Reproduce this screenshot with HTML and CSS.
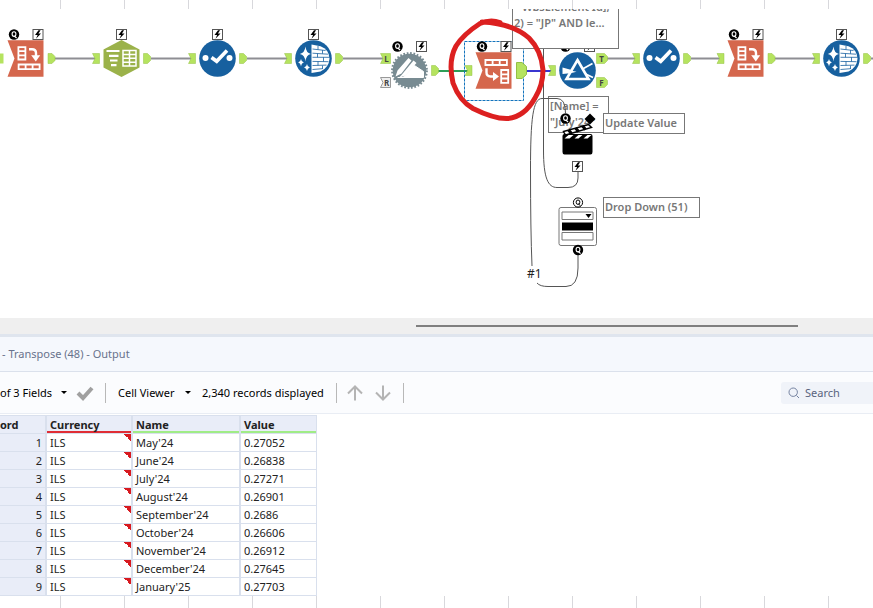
FILE: index.html
```
<!DOCTYPE html>
<html lang="en">
<head>
  <meta charset="UTF-8">
  <meta name="viewport" content="width=device-width, initial-scale=1">
  <title>Transpose (48) - Output</title>
  <link rel="stylesheet" href="styles.css">
</head>
<body>
  <main class="workflow">
    <svg class="flow" role="img" aria-label="Workflow">
      <defs>
        <!-- every tool is drawn around its own centre -->
        <g id="q">
          <circle r="5.2" fill="#000"/>
          <ellipse rx="1.9" ry="2.3" cy="-0.4" fill="none" stroke="#fff" stroke-width="1.1"/>
          <path d="M0.2 1.6L2.6 3.4" stroke="#fff" stroke-width="1.2"/>
        </g>
        <g id="qopen">
          <circle r="4.6" fill="#fff" stroke="#000"/>
          <ellipse rx="1.9" ry="2.2" cy="-0.3" fill="none" stroke="#000"/>
          <path d="M0.4 1.4L2.4 3.2" stroke="#000"/>
        </g>
        <g id="bolt">
          <rect x="-5" y="-5" width="10" height="10" fill="#fff" stroke="#555"/>
          <path d="M0.5 -4.2L-3 0.6H-0.4L-2 4.2L3 -1H0.4L2.6 -4.2Z" fill="#000"/>
        </g>
        <path id="in" d="M-29 -5H-22V5H-29L-26.5 0Z" fill="#b5e35f" stroke="#94c044" stroke-width="0.5"/>
        <path id="out" d="M22 -5H26L29 -2V2L26 5H22Z" fill="#b5e35f" stroke="#94c044" stroke-width="0.5"/>
        <path id="flag" d="M-18.500 -18.300H17.500V18.300H-18.500L-11.500 0Z" fill="#d5674d"/>
        <g id="crosstab">
          <use href="#flag"/>
          <g fill="none" stroke="#fff" stroke-width="1.8">
            <path d="M-7.6 -11.4H-0.6V1H-7.6ZM-7.6 -7.3H-0.6M-7.6 -3.2H-0.6"/>
            <path d="M-7.4 6H13.6V10.6H-7.4ZM-0.4 6V10.6M6.6 6V10.6"/>
            <path d="M3 -9.3H6Q10 -9.3 10 -5.5V-2" stroke-width="2.4"/>
          </g>
          <path d="M5.2 -3.2H14.2L9.8 3Z" fill="#fff"/>
        </g>
        <g id="transpose">
          <use href="#flag"/>
          <g fill="none" stroke="#fff" stroke-width="1.8">
            <path d="M-8.600 -10.500H12.900V-5.500H-8.600ZM-1.400 -10.500V-5.500M5.700 -10.500V-5.500"/>
            <path d="M7.2 -0.5H14.2V12.3H7.2ZM7.2 3.8H14.2M7.2 8H14.2"/>
            <path d="M-7.500 -2.3V2Q-7.500 6 -3.500 6H0" stroke-width="2.4"/>
          </g>
          <path d="M-1 1.6V10.6L5 6Z" fill="#fff"/>
        </g>
        <g id="fields">
          <path d="M0 -18.5L18 -9V9L0 18.5L-18 9V-9Z" fill="#9bb24a"/>
          <path d="M-15 -7.5H-2M-12.5 -2.7H-3M-11.5 2H-4M-10.5 6.7H-5" stroke="#fff" stroke-width="2.2" fill="none"/>
          <path d="M1.5 -8H14.5V7.5H1.5ZM1.5 -4.1H14.5M1.5 -0.2H14.5M1.5 3.7H14.5M8 -8V7.5" stroke="#fff" stroke-width="1.5" fill="none"/>
        </g>
        <g id="select">
          <circle r="18.3" fill="#17609f"/>
          <circle cx="-12" cy="-0.5" r="3" fill="#fff"/>
          <circle cx="12" cy="-0.5" r="3" fill="#fff"/>
          <path d="M-6 -1L-0.8 2.8L9.5 -8" stroke="#fff" stroke-width="3.6" fill="none"/>
        </g>
        <g id="cleanse">
          <circle r="18.3" fill="#17609f"/>
          <path d="M-8 -12Q-7.4 -5.6 -2.6 -4.6Q-7.4 -3.8 -8 3Q-8.8 -3.8 -13.6 -4.6Q-8.8 -5.6 -8 -12Z" fill="#fff"/>
          <path d="M-12.5 0.5Q-12 3.6 -9.6 4Q-12 4.6 -12.5 8Q-13 4.6 -15.4 4Q-13 3.6 -12.5 0.5Z" fill="#fff"/>
          <path d="M-6.5 5.5Q-6 8.6 -3.6 9Q-6 9.5 -6.5 12.5Q-7 9.5 -9.4 9Q-7 8.6 -6.5 5.5Z" fill="#fff"/>
          <path d="M-2 -14L7 -12.2Q15.5 -9 16 0Q15.5 9 7 13L-2 14.5Z" fill="#fff"/>
          <path d="M-1 -9.5L12 -8M-1 -5.3L14.5 -4.3M-1 -1.2H16M-1 2.9L15 3.2M-1 7L13 6.6M-1 11L9 10.2M4.5 -12.5V-9M9 -8.4V-4.8M4 -4.8V-1.2M10 -1.2V3M4.5 3V7M9 7V10.5" stroke="#17609f" stroke-width="0.8" fill="none"/>
        </g>
        <g id="gear">
          <circle r="16.8" fill="#788b92"/>
          <circle r="17.3" fill="none" stroke="#788b92" stroke-width="2.2" stroke-dasharray="1.7 1.7"/>
          <path d="M-14 6L-12 0L-1 -12.500L2 -10L-8 3ZM-11 7.500L-8 4.500L4 -10L7 -7.500L-4 5Z" fill="#fff"/>
          <path d="M-6 6.500L5 -5L14 1V7H-12" fill="#fff" stroke="#fff"/>
        </g>
        <g id="filter">
          <circle r="18.3" fill="#17609f"/>
          <path d="M-15 -3L-5 -0.2V2.6L-15 3.500Z" fill="#fff"/>
          <path d="M5 -1.5L15 -7M6 2.5L15.500 7" stroke="#fff" stroke-width="1.8"/>
          <path d="M0 -10.5L11 8.5H-11Z" fill="#17609f" stroke="#fff" stroke-width="2.6"/>
          <path d="M-7 0L-1 1.200L-8 3Z" fill="#fff"/>
        </g>
      </defs>

      <!-- wires -->
      <g class="wire">
        <path d="M55 58.5H96M151 58.5H192M247 58.5H288M343 58.5H385M607 58.5H636M691 58.5H720M775 58.5H816M871 58.5H880"/>
        <path class="wire-in" d="M438 71H468"/>
        <path class="wire-out" d="M526 71H552"/>
      </g>
      <path d="M0 53.5H3.5V63.5H0Z" fill="#b5e35f"/>

      <g transform="translate(26 58.5)"><use href="#out"/><use href="#crosstab"/><use href="#q" x="-12" y="-24"/><use href="#bolt" x="12" y="-24"/></g>
      <g transform="translate(121.5 58.5)"><use href="#in"/><use href="#out"/><use href="#fields"/><use href="#bolt" y="-24"/></g>
      <g transform="translate(217.5 58.5)"><use href="#in"/><use href="#out"/><use href="#select"/><use href="#bolt" y="-24"/></g>
      <g transform="translate(313.5 58.5)"><use href="#in"/><use href="#out"/><use href="#cleanse"/><use href="#bolt" y="-24"/></g>
      <g transform="translate(409.5 70.5)">
        <path d="M-29 -17H-19V-7H-29L-26.5 -12Z" fill="#b5e35f" stroke="#94c044" stroke-width="0.5"/>
        <path d="M-29 7H-19V17H-29L-26.5 12Z" fill="#eee" stroke="#999"/>
        <text class="port" x="-23" y="-9">L</text>
        <text class="port" x="-23" y="15">R</text>
        <use href="#out"/><use href="#gear"/><use href="#q" x="-12" y="-24"/><use href="#bolt" x="12" y="-24"/>
      </g>
      <g transform="translate(494 70.5)">
        <use href="#in"/>
        <rect class="selection" x="-29.5" y="-29" width="59" height="59"/>
        <path d="M22.5 -8H28L32.5 -4V4L28 8H22.5Z" fill="#b5e35f" stroke="#94c044"/>
        <use href="#transpose"/><use href="#q" x="-12" y="-24"/><use href="#bolt" x="12" y="-24"/>
      </g>
      <g transform="translate(577.5 70.5)">
        <use href="#in"/>
        <path d="M19 -17H27L30 -14V-10L27 -7H19ZM19 7H27L30 10V14L27 17H19Z" fill="#b5e35f" stroke="#94c044" stroke-width="0.5"/>
        <text class="port" x="24" y="-9">T</text>
        <text class="port" x="24" y="15">F</text>
        <use href="#filter"/><use href="#q" x="-12" y="-24"/><use href="#bolt" x="12" y="-24"/>
      </g>
      <g transform="translate(661.5 58.5)"><use href="#in"/><use href="#out"/><use href="#select"/><use href="#bolt" y="-24"/></g>
      <g transform="translate(746 58.5)"><use href="#in"/><use href="#out"/><use href="#crosstab"/><use href="#q" x="-12" y="-24"/><use href="#bolt" x="12" y="-24"/></g>
      <g transform="translate(841.5 58.5)"><use href="#in"/><use href="#out"/><use href="#cleanse"/><use href="#bolt" y="-24"/></g>
    </svg>

    <p class="note note-filter">WbsElement Id],<br>2) = "JP" AND le...</p>
    <p class="note note-name">[Name] =<br>"July'24"</p>

    <svg class="flow" aria-hidden="true">
      <!-- interface tools -->
      <g class="wire thin">
        <path d="M543.5 49V150C543.5 178 548 187.5 557 187.5H568Q578 187.5 578 178V172"/>
        <path d="M565.5 113Q565.5 98.5 557 98.5H542C533 98.5 530.5 118 530.5 170Q530.5 230 532 266M537 283Q540 286.5 548 286.5H566Q578 286.5 578 268V255"/>
      </g>
      <g transform="translate(577.5 135)">
        <path d="M-15 1Q-15 -1 -13 -1H13Q15 -1 15 1V17Q15 19.500 13 19.500H-13Q-15 19.500 -15 17Z" fill="#000"/>
        <path d="M-13 3.500L-9 0H-4L-8 3.500ZM-3 3.500L1 0H5L1 3.500ZM6 3.500L10 0H14L10 3.500Z" fill="#fff"/>
        <path d="M-14 -3.500L11 -10.500L14 -7.500L-12 0Z" fill="#fff" stroke="#000" stroke-width="1.500"/>
        <path d="M-9 -5L-6 -1.500M-2 -7L1 -3.500M5 -9L8 -5.500" stroke="#000" stroke-width="3"/>
        <path d="M12.500 -21.500L18 -16L12.500 -10.500L7 -16Z" fill="#000"/>
      </g>
      <use href="#q" x="565.5" y="118.5"/>
      <use href="#bolt" x="577.5" y="166.5"/>
      <g transform="translate(577.5 226.500)">
        <rect x="-18.500" y="-19" width="37.500" height="38" rx="2" fill="#fff" stroke="#777"/>
        <path d="M-15.500 -14.500H15.500V-7H-15.500ZM-15.500 6H15.500V13.500H-15.500Z" fill="#fff" stroke="#777"/>
        <path d="M-15.500 -4H15.500V4H-15.500Z" fill="#000"/>
        <path d="M8 -12.500H14L11 -8.500Z" fill="#000"/>
      </g>
      <use href="#qopen" x="578" y="202.5"/>
      <use href="#q" x="578" y="250"/>
      <text class="wire-label" x="527" y="278">#1</text>
      <!-- hand-drawn marker -->
      <path class="marker" d="M500 22.500C494 20.500 486 21 480 23.500C470 30 461 38 456 46C450 57 450 70 453 83C457 94 463 103 473 108.500C484 114 498 119 508 118.500C521 117 530 107 535 98C540 90 543 81 543 70C542 57 537 46 529 38C519 29 503 23 482 22"/>
    </svg>

    <p class="note note-update">Update Value</p>
    <p class="note note-drop">Drop Down (51)</p>
    <div class="ruler"></div>
  </main>

  <div class="scrollbar"><div class="thumb"></div></div>

  <section class="results">
    <h1 class="title">- Transpose (48) - Output</h1>
    <div class="toolbar">
      <button class="menu menu-fields" type="button">of 3 Fields <span class="caret"></span></button>
      <button class="icon-btn" type="button" aria-label="Apply">
        <svg width="18" height="16" viewBox="0 0 18 16"><path d="M2 8L7 13L16 3" fill="none" stroke="#a0a0a0" stroke-width="4"/></svg>
      </button>
      <span class="sep"></span>
      <button class="menu menu-viewer" type="button">Cell Viewer <span class="caret"></span></button>
      <span class="count">2,340 records displayed</span>
      <span class="sep"></span>
      <button class="icon-btn arrow" type="button" aria-label="Previous">
        <svg width="16" height="16" viewBox="0 0 16 16"><path d="M8 15.500V2M1 8.500L8 1.500L15 8.500" fill="none" stroke="#b4b4b4" stroke-width="2"/></svg>
      </button>
      <button class="icon-btn arrow" type="button" aria-label="Next">
        <svg width="16" height="16" viewBox="0 0 16 16"><path d="M8 0.500V14M1 7.500L8 14.500L15 7.500" fill="none" stroke="#b4b4b4" stroke-width="2"/></svg>
      </button>
      <span class="sep"></span>
      <label class="search">
        <svg width="12" height="12" viewBox="0 0 12 12"><path d="M8.500 8.500L11 11M1 5.200a4.200 4.200 0 1 0 8.400 0a4.200 4.200 0 1 0 -8.400 0" fill="none" stroke="#7482a0"/></svg>
        <input type="search" placeholder="Search" aria-label="Search">
      </label>
    </div>

    <table class="grid">
      <thead>
        <tr><th class="rec">ord</th><th class="cur">Currency</th><th class="name">Name</th><th class="val">Value</th></tr>
      </thead>
      <tbody>
        <tr><th>1</th><td class="flagged">ILS</td><td>May'24</td><td>0.27052</td></tr>
        <tr><th>2</th><td class="flagged">ILS</td><td>June'24</td><td>0.26838</td></tr>
        <tr><th>3</th><td class="flagged">ILS</td><td>July'24</td><td>0.27271</td></tr>
        <tr><th>4</th><td class="flagged">ILS</td><td>August'24</td><td>0.26901</td></tr>
        <tr><th>5</th><td class="flagged">ILS</td><td>September'24</td><td>0.2686</td></tr>
        <tr><th>6</th><td class="flagged">ILS</td><td>October'24</td><td>0.26606</td></tr>
        <tr><th>7</th><td class="flagged">ILS</td><td>November'24</td><td>0.26912</td></tr>
        <tr><th>8</th><td class="flagged">ILS</td><td>December'24</td><td>0.27645</td></tr>
        <tr><th>9</th><td class="flagged">ILS</td><td>January'25</td><td>0.27703</td></tr>
      </tbody>
    </table>
  </section>
  <div class="sheet"></div>
</body>
</html>
```

FILE: styles.css
```
* {
  box-sizing: border-box;
}

body {
  margin: 0;
  min-height: 100vh;
  display: flex;
  flex-direction: column;
  overflow: hidden;
  background: #fff;
  font-family: "Noto Sans", "Open Sans", sans-serif;
  font-size: 11px;
  color: #222;
}

button,
input {
  font: inherit;
  color: inherit;
  border: 0;
  padding: 0;
  background: none;
}

/* workflow canvas */
.workflow {
  position: relative;
  height: 318px;
  overflow: hidden;
}

.flow {
  position: absolute;
  top: 0;
  left: 0;
  width: 100%;
  height: 100%;
}

.ruler,
.sheet {
  background: repeating-linear-gradient(to right, #fff 0 60px, #d8d8dc 60px 61px, #fff 61px 64px);
}

.ruler {
  position: absolute;
  top: 0;
  left: 0;
  right: 0;
  height: 9px;
}

.wire path {
  fill: none;
  stroke: #8e8e93;
  stroke-width: 2;
}

.wire.thin path {
  stroke: #555;
  stroke-width: 1;
}

.wire .wire-in {
  stroke: #2e9e57;
}

.wire .wire-out {
  stroke: #3a35d0;
}

.selection {
  fill: none;
  stroke: #1474bd;
  stroke-dasharray: 3 1;
}

.marker {
  fill: none;
  stroke: #dc2020;
  stroke-width: 5;
  stroke-linecap: round;
}

.port {
  font-size: 8px;
  font-weight: bold;
  text-anchor: middle;
  fill: #444;
}

.wire-label {
  font-size: 12px;
  fill: #222;
}

.note {
  position: absolute;
  margin: 0;
  padding: 1px;
  border: 1px solid #777;
  background: #fff;
  color: #777;
  font-size: 11px;
  font-weight: 600;
  line-height: 16px;
  white-space: nowrap;
}

.note-filter {
  top: -3px;
  left: 512px;
  width: 107px;
  height: 52px;
  text-indent: 8px;
}

.note-filter br {
  line-height: 16px;
}

.note-name {
  top: 96px;
  left: 548px;
  width: 61px;
  height: 37px;
}

.note-update {
  top: 113px;
  left: 603px;
  width: 82px;
  height: 21px;
}

.note-drop {
  top: 197px;
  left: 603px;
  width: 97px;
  height: 21px;
}

.scrollbar {
  display: flex;
  align-items: center;
  height: 16px;
  padding: 0 75px 0 416px;
  background: #efefef;
}

.thumb {
  flex: 1;
  height: 2px;
  background: #7f7f7f;
}

/* results window */
.results {
  border-top: 3px solid #dfe5ee;
}

.title {
  margin: 0;
  padding: 0 2px;
  height: 35px;
  border-bottom: 1px solid #dbe1ec;
  background: #f5f8fd;
  color: #68728c;
  font-size: 11px;
  font-weight: normal;
  line-height: 34px;
}

.toolbar {
  display: flex;
  align-items: center;
  height: 42px;
  border-bottom: 1px solid #e9edf4;
  background: #fbfcfe;
  color: #000;
  white-space: nowrap;
}

.menu {
  display: flex;
  align-items: center;
  justify-content: space-between;
}

.menu-fields {
  width: 67px;
}

.menu-viewer {
  width: 73px;
  margin-left: 12px;
}

.caret {
  border: 3px solid transparent;
  border-top-color: #000;
  border-bottom: 0;
}

.icon-btn {
  display: flex;
  margin: 0 11px 0 9px;
}

.icon-btn.arrow {
  margin: 0 2px 0 10px;
}

.sep {
  width: 1px;
  height: 20px;
  background: #b8b8b8;
}

.count {
  width: 134px;
  margin-left: 11px;
}

.arrow + .sep {
  margin-left: 10px;
}

.search {
  display: flex;
  align-items: center;
  gap: 5px;
  width: 92px;
  height: 22px;
  margin-left: auto;
  padding-left: 7px;
  border-radius: 3px 0 0 3px;
  background: #f0f3f9;
  color: #59637e;
}

.search input {
  width: 60px;
}

.search input::placeholder {
  color: #59637e;
}

.grid {
  width: 317px;
  margin-top: 1px;
  border-collapse: collapse;
  table-layout: fixed;
}

.grid th,
.grid td {
  height: 18px;
  padding: 0 3px;
  border: 1px solid #d9e0ed;
  border-width: 1px 1px 1px 2px;
  line-height: 16px;
  text-align: left;
}

.grid th {
  background: #e9edf8;
}

.grid tbody th {
  border-left: 0;
  font-weight: normal;
  text-align: right;
}

.grid thead th {
  box-shadow: inset 0 -2px #a0ec86;
}

.grid thead .rec {
  width: 46px;
  padding-left: 0;
  border-left: 0;
  box-shadow: none;
}

.grid thead .cur {
  width: 86px;
  box-shadow: inset 0 -2px #e02d35;
}

.grid .name {
  width: 108px;
}

.flagged {
  background: linear-gradient(to top right, transparent 50%, #d81a20 50%) top right / 7px 7px no-repeat;
}

.sheet {
  flex: 1;
  min-height: 13px;
}
```
